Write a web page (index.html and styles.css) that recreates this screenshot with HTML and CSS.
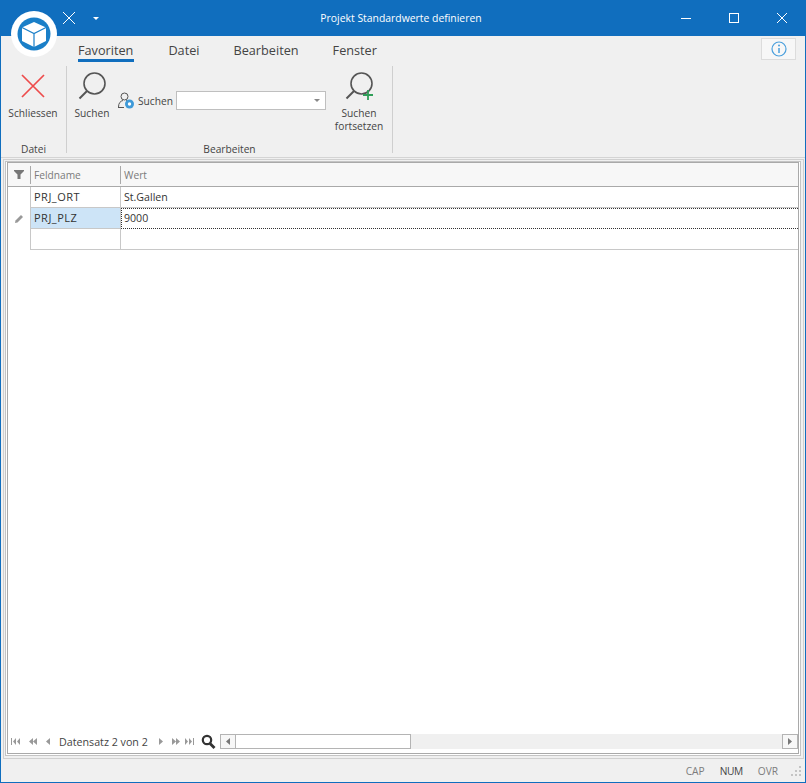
FILE: index.html
```html
<!DOCTYPE html>
<html lang="de">

<head>
  <meta charset="UTF-8">
  <title>Projekt Standardwerte definieren</title>
  <link rel="stylesheet" href="styles.css">
</head>

<body>
  <div class="window">
    <div class="app-logo">
      <svg width="46" height="46" viewBox="0 0 46 46">
        <circle cx="23" cy="23" r="16.500" fill="#1a7fc8"/>
        <path d="M23 11 35 16.500V30L23 36 11 30V16.500z" fill="#fff"/>
        <path d="M11 16.500 23 22.500 35 16.500M23 22.500V36" fill="none" stroke="#1a7fc8" stroke-width="1.200"/>
      </svg>
    </div>

    <div class="titlebar">
      <div class="quick-access">
        <svg width="14" height="14" viewBox="0 0 14 14"><path d="M1 1 13 13M13 1 1 13" stroke="#fff" stroke-width="1" fill="none"/></svg>
        <svg class="quick-arrow" width="6" height="3" viewBox="0 0 6 3"><path d="M0 0h6L3 3z" fill="#fff"/></svg>
      </div>
      <div class="title">Projekt Standardwerte definieren</div>
      <div class="window-buttons">
        <svg width="12" height="12" viewBox="0 0 12 12"><path d="M1 6.500h10" stroke="#fff" fill="none"/></svg>
        <svg width="12" height="12" viewBox="0 0 12 12"><rect x="1.500" y="1.500" width="9" height="9" stroke="#fff" fill="none"/></svg>
        <svg width="12" height="12" viewBox="0 0 12 12"><path d="M1 1 11 11M11 1 1 11" stroke="#fff" fill="none"/></svg>
      </div>
    </div>

    <div class="ribbon">
      <div class="tabs">
        <div class="tab active">Favoriten</div>
        <div class="tab">Datei</div>
        <div class="tab">Bearbeiten</div>
        <div class="tab">Fenster</div>
        <div class="info-button">
          <svg width="16" height="16" viewBox="0 0 16 16">
            <circle cx="8" cy="8" r="7" fill="none" stroke="#4a9fdc" stroke-width="1.200"/>
            <path d="M8 7v5" stroke="#4a9fdc" stroke-width="1.500"/>
            <circle cx="8" cy="4.600" r="1" fill="#4a9fdc"/>
          </svg>
        </div>
      </div>

      <div class="groups">
        <div class="group group-datei">
          <div class="group-items">
            <div class="big-button">
              <svg width="26" height="26" viewBox="0 0 26 26"><path d="M2 2 24 24M24 2 2 24" stroke="#ee4b4b" stroke-width="1.700" fill="none"/></svg>
              <span>Schliessen</span>
            </div>
          </div>
          <div class="group-label">Datei</div>
        </div>

        <div class="group group-bearbeiten">
          <div class="group-items">
            <div class="big-button">
              <svg width="30" height="30" viewBox="0 0 30 30">
                <circle cx="17.500" cy="12.500" r="10.500" fill="none" stroke="#555" stroke-width="1.600"/>
                <path d="M10 20 2.500 27.500" stroke="#555" stroke-width="2" fill="none"/>
              </svg>
              <span>Suchen</span>
            </div>
            <div class="search-field">
              <svg width="18" height="18" viewBox="0 0 18 18">
                <circle cx="7.500" cy="4.500" r="3.500" fill="none" stroke="#555"/>
                <path d="M1.500 15c0-4 2-6 4.500-6.500M9 8.300l1 .7" fill="none" stroke="#555"/>
                <path d="M1 15.500h6" stroke="#555"/>
                <circle cx="12.500" cy="12" r="4.500" fill="#3f9ad8"/>
                <circle cx="12.500" cy="12" r="1.700" fill="#fff"/>
              </svg>
              <span>Suchen</span>
              <div class="combo">
                <svg width="6" height="3" viewBox="0 0 6 3"><path d="M0 0h6L3 3z" fill="#888"/></svg>
              </div>
            </div>
            <div class="big-button">
              <svg width="30" height="30" viewBox="0 0 30 30">
                <circle cx="17.500" cy="12.500" r="10.500" fill="none" stroke="#555" stroke-width="1.600"/>
                <path d="M10 20 2.500 27.500" stroke="#555" stroke-width="2" fill="none"/>
                <path d="M24 19v10M19 24h10" stroke="#2f9e58" stroke-width="1.800" fill="none"/>
              </svg>
              <span>Suchen<br>fortsetzen</span>
            </div>
          </div>
          <div class="group-label">Bearbeiten</div>
        </div>
      </div>
    </div>

    <div class="content">
      <div class="grid-frame">
        <div class="grid-inner">
          <div class="grid-box">
            <div class="grid-table">
              <div class="row head-row">
                <div class="indicator">
                  <svg width="10" height="9" viewBox="0 0 10 9"><path d="M0 0h10v1L6.500 4.500V9h-3V4.500L0 1z" fill="#777"/></svg>
                </div>
                <div class="cell name-col"><span class="head-text">Feldname</span></div>
                <div class="cell value-col"><span class="head-text">Wert</span></div>
              </div>
              <div class="row">
                <div class="indicator"></div>
                <div class="cell name-col field-name">PRJ_ORT</div>
                <div class="cell value-col">St.Gallen</div>
              </div>
              <div class="row">
                <div class="indicator">
                  <svg width="10" height="10" viewBox="0 0 10 10"><path d="M1 9 1.500 6.500 7 1l2 2-5.500 5.500z" fill="#999"/></svg>
                </div>
                <div class="cell name-col field-name selected">PRJ_PLZ</div>
                <div class="cell value-col focused">9000</div>
              </div>
              <div class="row">
                <div class="indicator"></div>
                <div class="cell name-col"></div>
                <div class="cell value-col"></div>
              </div>
            </div>

            <div class="navigator">
              <div class="nav-buttons">
                <svg width="9" height="7" viewBox="0 0 9 7"><path d="M0 0h1v7H0zM5 0v7L2 3.500zM9 0v7L6 3.500z" fill="#999"/></svg>
                <svg width="8" height="7" viewBox="0 0 8 7"><path d="M4 0v7L0 3.500zM8 0v7L4 3.500z" fill="#999"/></svg>
                <svg width="4" height="7" viewBox="0 0 4 7"><path d="M4 0v7L0 3.500z" fill="#999"/></svg>
              </div>
              <span class="nav-text">Datensatz 2 von 2</span>
              <div class="nav-buttons">
                <svg width="4" height="7" viewBox="0 0 4 7"><path d="M0 0v7l4-3.500z" fill="#999"/></svg>
                <svg width="8" height="7" viewBox="0 0 8 7"><path d="M0 0v7l4-3.500zM4 0v7l4-3.500z" fill="#999"/></svg>
                <svg class="nav-last" width="9" height="7" viewBox="0 0 9 7"><path d="M0 0v7l3-3.500zM4 0v7l3-3.500zM8 0h1v7H8z" fill="#999"/></svg>
              </div>
              <svg class="nav-search" width="15" height="15" viewBox="0 0 15 15">
                <circle cx="6" cy="6" r="4.200" fill="none" stroke="#333" stroke-width="2.200"/>
                <path d="M9 9.500 13.500 14" stroke="#333" stroke-width="2.800"/>
              </svg>
              <div class="scrollbar">
                <div class="scroll-btn"><svg width="4" height="7" viewBox="0 0 4 7"><path d="M4 0v7L0 3.500z" fill="#777"/></svg></div>
                <div class="scroll-thumb"></div>
                <div class="scroll-track"></div>
                <div class="scroll-btn"><svg width="4" height="7" viewBox="0 0 4 7"><path d="M0 0v7l4-3.500z" fill="#777"/></svg></div>
              </div>
            </div>
          </div>
        </div>
      </div>
    </div>

    <div class="statusbar">
      <span class="dim">CAP</span>
      <span class="num">NUM</span>
      <span class="dim">OVR</span>
      <svg class="grip" width="12" height="12" viewBox="0 0 12 12"><path d="M9 1h2v2H9zM5 5h2v2H5zM9 5h2v2H9zM1 9h2v2H1zM5 9h2v2H5zM9 9h2v2H9z" fill="#c4c4c4"/></svg>
    </div>
  </div>
</body>

</html>
```

FILE: styles.css
```css
html,
body {
  height: 100%;
}

body {
  margin: 0;
  font-family: "Open Sans", "Noto Sans", sans-serif;
  font-size: 10.200px;
  color: #444;
  overflow: hidden;
}

.window {
  position: relative;
  height: 100%;
  box-sizing: border-box;
  display: flex;
  flex-direction: column;
  border: solid #106ebe;
  border-width: 0 1px 1px 1px;
  background-color: #f0f0f0;
}

.app-logo {
  position: absolute;
  top: 11px;
  left: 10px;
  width: 46px;
  height: 46px;
  border-radius: 50%;
  background-color: #fff;
}

.titlebar {
  height: 36px;
  flex: none;
  display: flex;
  align-items: center;
  background-color: #106ebe;
  color: #fff;
  margin: 0 -1px;
}

.quick-access {
  width: 320px;
  padding-left: 62px;
  box-sizing: border-box;
  display: flex;
  align-items: center;
}

.quick-arrow {
  margin-left: 17px;
}

.title {
  width: 162px;
  font-size: 10.400px;
  text-align: center;
  white-space: nowrap;
}

.window-buttons {
  margin-left: auto;
  display: flex;
  gap: 36px;
  padding-right: 18px;
}

.ribbon {
  flex: none;
  height: 122px;
  border-bottom: 1px solid #d4d4d4;
  box-sizing: border-box;
}

.tabs {
  display: flex;
  height: 29px;
  padding-left: 77px;
  align-items: flex-start;
}

.tab {
  font-size: 12.700px;
  line-height: 28px;
  height: 26px;
  margin-right: 34px;
  color: #444;
}

.tab.active {
  border-bottom: 3px solid #106ebe;
  box-sizing: border-box;
  padding-right: 1px;
}

.info-button {
  margin: 2px 9px 0 auto;
  width: 33px;
  height: 20px;
  background-color: #f7f7f7;
  border: 1px solid #dcdcdc;
  display: flex;
  justify-content: center;
  align-items: center;
}

.groups {
  display: flex;
  height: 88px;
}

.group {
  display: flex;
  flex-direction: column;
  border-right: 1px solid #cfcfcf;
  margin-top: 1px;
}

.group-datei {
  width: 65px;
}

.group-bearbeiten {
  width: 325px;
}

.group-items {
  flex: 1;
  min-height: 0;
  display: flex;
  align-items: flex-start;
}

.group-label {
  height: 12px;
  line-height: 12px;
  margin-bottom: -2px;
  text-align: center;
}

.big-button {
  display: flex;
  flex-direction: column;
  align-items: center;
  text-align: center;
  line-height: 13px;
  padding-top: 5px;
  gap: 6px;
}

.group-datei .big-button {
  width: 100%;
  padding: 7px 1px 0 0;
  gap: 8px;
}

.group-bearbeiten .big-button {
  width: 50px;
}

.group-bearbeiten .big-button:last-child {
  width: 56px;
  margin-left: 5px;
}

.search-field {
  display: flex;
  align-items: center;
  gap: 3px;
  margin-top: 25px;
  width: 209px;
}

.combo {
  flex: 1;
  height: 17px;
  background-color: #fff;
  border: 1px solid #bfbfbf;
  display: flex;
  justify-content: flex-end;
  align-items: center;
  padding-right: 5px;
}

.content {
  flex: 1;
  min-height: 0;
  padding: 1px 1px 0 2px;
  display: flex;
}

.grid-frame {
  flex: 1;
  padding: 1px 2px 2px 1px;
  border: 1px solid #d0d0d0;
  display: flex;
}

.grid-inner {
  flex: 1;
  padding: 0 1px 1px 1px;
  border: 1px solid #c4c4c4;
  background-color: #fff;
  display: flex;
}

.grid-box {
  flex: 1;
  border: 1px solid #a9a9a9;
  display: flex;
  flex-direction: column;
}

.grid-table {
  flex: 1;
}

.row {
  display: flex;
  height: 21px;
  box-sizing: border-box;
}

.indicator {
  width: 23px;
  flex: none;
  display: flex;
  justify-content: center;
  align-items: center;
  border-right: 1px solid #c8c8c8;
  box-sizing: border-box;
}

.cell {
  padding-left: 3px;
  font-size: 10.600px;
  line-height: 20px;
  color: #333;
  border-bottom: 1px solid #c8c8c8;
  box-sizing: border-box;
}

.name-col {
  width: 90px;
  flex: none;
  border-right: 1px solid #c8c8c8;
}

.field-name {
  font-size: 11px;
  letter-spacing: 0.500px;
}

.value-col {
  flex: 1;
}

.head-row {
  height: 24px;
  background-color: #f7f7f7;
  border-bottom: 1px solid #a9a9a9;
}

.head-row .cell {
  border-bottom: 0;
  border-right: 0;
  color: #7a7a7a;
  font-size: 10.200px;
  padding-left: 0;
}

.head-row .indicator {
  border-right: 0;
  padding-right: 1px;
}

.head-text {
  display: block;
  height: 18px;
  margin: 3px 0 0 -1px;
  line-height: 18px;
  padding-left: 3px;
  border-left: 1px solid #a9a9a9;
}

.selected {
  background-color: #cde4f7;
}

.focused {
  border: 1px dotted #333;
  border-right: 0;
  padding-left: 2px;
  line-height: 19px;
}

.navigator {
  display: flex;
  align-items: center;
  height: 19px;
  flex: none;
  padding: 0 0 2px 3px;
}

.nav-buttons {
  display: flex;
  align-items: center;
  gap: 9px;
}

.nav-last {
  margin-left: -4px;
}

.nav-text {
  margin: 0 11px 0 9px;
  font-size: 10.700px;
  color: #444;
}

.nav-search {
  margin: 0 4px 0 7px;
  flex: none;
}

.scrollbar {
  flex: 1;
  display: flex;
  height: 15px;
}

.scroll-btn {
  width: 16px;
  box-sizing: border-box;
  border: 1px solid #b4b4b4;
  background-color: #f7f7f7;
  display: flex;
  justify-content: center;
  align-items: center;
}

.scroll-thumb {
  width: 175px;
  box-sizing: border-box;
  border: 1px solid #b4b4b4;
  border-left: 0;
  background-color: #fff;
}

.scroll-track {
  flex: 1;
  background-color: #f0f0f0;
}

.statusbar {
  height: 23px;
  flex: none;
  display: flex;
  justify-content: flex-end;
  align-items: center;
  gap: 15px;
  padding-right: 3px;
  color: #444;
}

.statusbar .dim {
  color: #7d7d7d;
}

.num {
  letter-spacing: -0.400px;
}

.grip {
  margin-left: -3px;
}
```
